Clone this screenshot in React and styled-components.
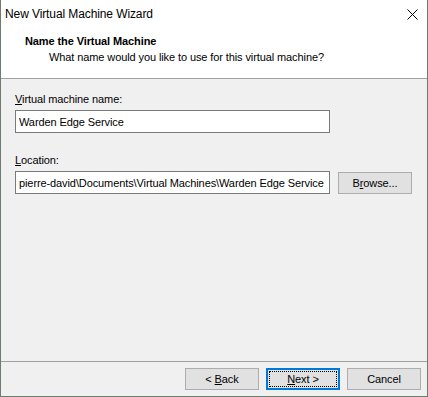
import React, { useState } from "react";
import styled, { createGlobalStyle } from "styled-components";

const GlobalStyle = createGlobalStyle`
  html, body {
    margin: 0;
    padding: 0;
    background: #ffffff;
  }
  body {
    font-family: "Liberation Sans", Arial, sans-serif;
    font-size: 11px;
    letter-spacing: -0.1px;
    color: #000;
  }
`;

const Window = styled.div`
  width: 428px;
  height: 397px;
  box-sizing: border-box;
  border: 1px solid #6f7b70;
  border-top: none;
  display: flex;
  flex-direction: column;
  background: #f0f0f0;
`;

const TitleBar = styled.div`
  height: 30px;
  flex-shrink: 0;
  background: #fff;
  display: flex;
  align-items: center;
  justify-content: space-between;
  padding: 0 9px 0 4px;
`;

const TitleText = styled.span`
  font-size: 12px;
  line-height: 16px;
  margin-top: -2px;
`;

const CloseButton = styled.button`
  border: none;
  background: transparent;
  padding: 0;
  width: 12px;
  height: 12px;
  display: flex;
  align-items: center;
  justify-content: center;
  margin-top: -2px;
`;

const Header = styled.div`
  height: 49px;
  flex-shrink: 0;
  box-sizing: border-box;
  background: #fff;
  border-bottom: 1px solid #a0a0a0;
  padding: 3px 0 0 24px;
  display: flex;
  flex-direction: column;
`;

const HeaderTitle = styled.div`
  font-weight: bold;
  line-height: 16px;
`;

const HeaderSub = styled.div`
  line-height: 16px;
  padding-left: 24px;
`;

const Body = styled.div`
  flex: 1;
  padding: 12px 0 0 14px;
  display: flex;
  flex-direction: column;
`;

const Label = styled.label`
  line-height: 16px;
  margin-bottom: ${(p) => p.$gap || 3}px;
`;

const Field = styled.div`
  display: flex;
  align-items: center;
  gap: 8px;
  margin-bottom: ${(p) => p.$after || 0}px;
`;

const TextBox = styled.input`
  width: 315px;
  height: 23px;
  box-sizing: border-box;
  border: 1px solid #7a7a7a;
  background: #fff;
  font-family: inherit;
  font-size: 11px;
  letter-spacing: -0.1px;
  padding: 0 3px;
  margin: 0;
  outline: none;
  color: #000;
`;

const Button = styled.button`
  width: 74px;
  height: 22px;
  box-sizing: border-box;
  background: #e1e1e1;
  border: 1px solid #adadad;
  font-family: inherit;
  font-size: 11px;
  letter-spacing: -0.1px;
  color: #000;
  padding: 0;
  margin: 0;
  position: relative;
  cursor: default;
  ${(p) =>
    p.$default &&
    `
    border: 2px solid #0078d7;
    &::after {
      content: "";
      position: absolute;
      inset: 1px;
      border: 1px dotted #000;
    }
  `}
`;

const Footer = styled.div`
  height: 35px;
  flex-shrink: 0;
  box-sizing: border-box;
  border-top: 1px solid #a0a0a0;
  display: flex;
  justify-content: flex-end;
  align-items: flex-start;
  gap: 7px;
  padding: 6px 6px 0 0;
`;

const Key = styled.span`
  text-decoration: underline;
`;

function CloseIcon() {
  return (
    <svg width="11" height="11" viewBox="0 0 11 11">
      <path d="M0.5 0.5 L10.5 10.5 M10.5 0.5 L0.5 10.5" stroke="#000" strokeWidth="1" fill="none" />
    </svg>
  );
}

export default function App() {
  const [name, setName] = useState("Warden Edge Service");
  const [location, setLocation] = useState(
    "pierre-david\\Documents\\Virtual Machines\\Warden Edge Service"
  );

  return (
    <>
      <GlobalStyle />
      <Window>
        <TitleBar>
          <TitleText>New Virtual Machine Wizard</TitleText>
          <CloseButton aria-label="Close">
            <CloseIcon />
          </CloseButton>
        </TitleBar>
        <Header>
          <HeaderTitle>Name the Virtual Machine</HeaderTitle>
          <HeaderSub>What name would you like to use for this virtual machine?</HeaderSub>
        </Header>
        <Body>
          <Label htmlFor="vmname">
            <Key>V</Key>irtual machine name:
          </Label>
          <Field $after={19}>
            <TextBox id="vmname" value={name} onChange={(e) => setName(e.target.value)} />
          </Field>
          <Label htmlFor="vmloc">
            <Key>L</Key>ocation:
          </Label>
          <Field>
            <TextBox id="vmloc" value={location} onChange={(e) => setLocation(e.target.value)} />
            <Button>
              B<Key>r</Key>owse...
            </Button>
          </Field>
        </Body>
        <Footer>
          <Button>
            &lt; <Key>B</Key>ack
          </Button>
          <Button $default>
            <Key>N</Key>ext &gt;
          </Button>
          <Button>Cancel</Button>
        </Footer>
      </Window>
    </>
  );
}
